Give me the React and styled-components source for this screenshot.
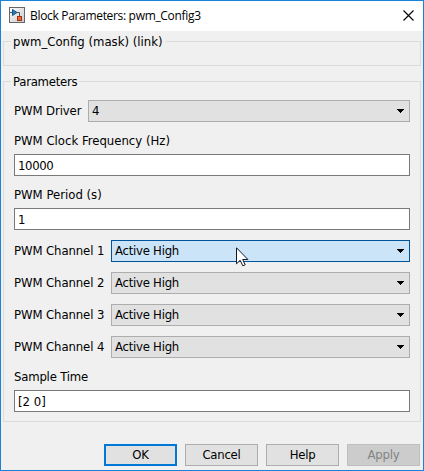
import React from 'react';
import styled, { createGlobalStyle } from 'styled-components';

const GlobalStyle = createGlobalStyle`
  * { box-sizing: border-box; }
  body { margin: 0; }
`;

const Window = styled.main`
  position: relative;
  display: flex;
  flex-direction: column;
  width: 424px;
  height: 471px;
  border: 1px solid #1883d7;
  background: #f0f0f0;
  color: #000;
  font: 13px/16px 'DejaVu Sans Condensed', 'DejaVu Sans', sans-serif;
  white-space: nowrap;
  overflow: hidden;
`;

const TitleBar = styled.header`
  display: flex;
  flex: none;
  height: 30px;
  padding: 6px 9px 0 8px;
  background: #fff;
`;

const Title = styled.h1`
  flex: 1;
  margin: 1px 0 0 5px;
  font: 400 12px/16px 'Open Sans', sans-serif;
  letter-spacing: -0.32px;
`;

const CloseButton = styled.button`
  display: block;
  width: 11px;
  height: 11px;
  margin-top: 3px;
  padding: 0;
  border: 0;
  background: none;
  svg { display: block; }
`;

const Group = styled.section`
  flex: none;
  width: 418px;
  height: ${(p) => p.$height}px;
  margin: ${(p) => p.$top}px 0 0 2px;
  padding: 0 10px;
  border: 1px solid #dcdcdc;
`;

const Legend = styled.h2`
  width: max-content;
  height: 16px;
  margin: -8px 0 0 -3px;
  padding: 0 2px;
  background: #f0f0f0;
  font: inherit;
  letter-spacing: ${(p) => p.$spacing || 0}px;
`;

const Row = styled.label`
  display: flex;
  height: 22px;
  margin-top: 10px;
  line-height: 22px;
`;

const RowLabel = styled.span`
  flex: none;
  width: ${(p) => p.$width}px;
  letter-spacing: -0.1px;
`;

const Field = styled.label`
  display: block;
  margin-top: 11px;
`;

const FieldLabel = styled.span`
  display: block;
  width: max-content;
  height: 21px;
  letter-spacing: ${(p) => p.$spacing || 0}px;
`;

const TextInput = styled.input`
  display: block;
  width: 396px;
  height: 22px;
  padding: 0 3px;
  border: 1px solid #7a7a7a;
  border-radius: 0;
  outline: 0;
  background: #fff;
  color: #000;
  font: inherit;
  letter-spacing: ${(p) => p.$spacing || 0}px;
`;

const Dropdown = styled.span`
  display: flex;
  flex: 1;
  justify-content: space-between;
  height: 22px;
  padding: 0 5px 0 3px;
  border: 1px solid ${(p) => (p.$active ? '#005499' : '#adadad')};
  background: ${(p) => (p.$active ? '#cce4f7' : '#e1e1e1')};
  line-height: 20px;
  letter-spacing: -0.25px;
  svg { display: block; margin-top: 8px; }
`;

const Footer = styled.footer`
  display: flex;
  justify-content: flex-end;
  gap: 8px;
  margin-top: 22px;
  padding-right: 3px;
`;

const Button = styled.button`
  width: 73px;
  height: 22px;
  padding: 0;
  border: ${(p) => (p.$primary ? '2px solid #0078d7' : '1px solid #adadad')};
  border-radius: 0;
  background: #e1e1e1;
  color: #000;
  font: inherit;
  letter-spacing: -0.25px;
  &:disabled {
    border-color: #bfbfbf;
    background: #ccc;
    color: #838383;
  }
`;

const Pointer = styled.svg`
  position: absolute;
  left: 235px;
  top: 246px;
`;

const BlockIcon = () => (
  <svg width="16" height="16" viewBox="0 0 16 16">
    <defs>
      <linearGradient id="tile" x1="0" y1="0" x2="1" y2="1">
        <stop offset="0" stopColor="#fff" />
        <stop offset="1" stopColor="#c8c8c8" />
      </linearGradient>
    </defs>
    <rect x=".5" y=".5" width="15" height="15" fill="url(#tile)" stroke="#666" />
    <path d="M1 5.5h3M8 5.5h2.500v4" fill="none" stroke="#555" />
    <path d="M3.500 2.500v6l4.500-3z" fill="#2a82b8" stroke="#145582" />
    <rect x="8.500" y="9.500" width="4" height="4" fill="#e8683c" stroke="#a8310d" />
  </svg>
);

const Select = ({ value, active }) => (
  <Dropdown $active={active}>
    {value}
    <svg width="7" height="4" shapeRendering="crispEdges">
      <path d="M0 0h7v1H6v1H5v1H4v1H3V3H2V2H1V1H0z" />
    </svg>
  </Dropdown>
);

const Edit = ({ label, value, spacing, valueSpacing }) => (
  <Field>
    <FieldLabel $spacing={spacing}>{label}</FieldLabel>
    <TextInput defaultValue={value} $spacing={valueSpacing} />
  </Field>
);

export default function App() {
  return (
    <>
      <GlobalStyle />
      <Window>
        <TitleBar>
          <BlockIcon />
          <Title>Block Parameters: pwm_Config3</Title>
          <CloseButton aria-label="Close">
            <svg width="11" height="11">
              <path d="M.5.5l10 10M10.500.5l-10 10" stroke="#000" strokeWidth="1.100" />
            </svg>
          </CloseButton>
        </TitleBar>
        <Group $top={10} $height={25}>
          <Legend>pwm_Config (mask) (link)</Legend>
        </Group>
        <Group $top={15} $height={341}>
          <Legend $spacing={-0.25}>Parameters</Legend>
          <Row>
            <RowLabel $width={74}>PWM Driver</RowLabel>
            <Select value="4" />
          </Row>
          <Edit label="PWM Clock Frequency (Hz)" value="10000" valueSpacing={-0.35} />
          <Edit label="PWM Period (s)" value="1" />
          {[1, 2, 3, 4].map((n) => (
            <Row key={n}>
              <RowLabel $width={97}>PWM Channel {n}</RowLabel>
              <Select value="Active High" active={n === 1} />
            </Row>
          ))}
          <Edit label="Sample Time" value="[2 0]" spacing={-0.2} />
        </Group>
        <Footer>
          <Button $primary>OK</Button>
          <Button>Cancel</Button>
          <Button>Help</Button>
          <Button disabled>Apply</Button>
        </Footer>
        <Pointer width="13" height="20" viewBox="0 0 13 20">
          <path d="M.5.8v16l3.700-3.500 2.600 5.500 2.400-1-2.500-5.300h5.200z" fill="#fff" stroke="#111827" />
        </Pointer>
      </Window>
    </>
  );
}
